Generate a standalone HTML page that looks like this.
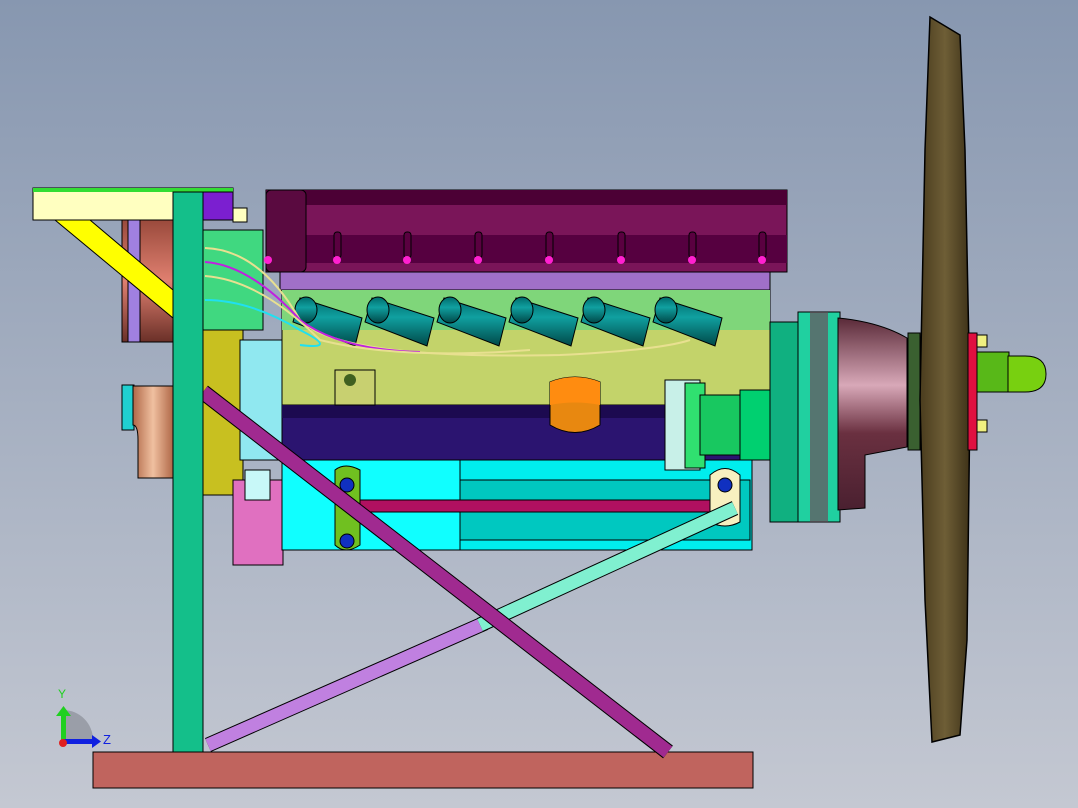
<!DOCTYPE html>
<html><head><style>html,body{margin:0;padding:0;overflow:hidden}svg{display:block}</style></head><body>
<svg width="1078" height="808" viewBox="0 0 1078 808" xmlns="http://www.w3.org/2000/svg">
<defs>
<linearGradient id="bg" x1="0" y1="0" x2="0" y2="1"><stop offset="0" stop-color="#8797b0"/><stop offset="1" stop-color="#c4c8d2"/></linearGradient>
<linearGradient id="blade" x1="0" y1="0" x2="1" y2="0"><stop offset="0" stop-color="#4a3c1e"/><stop offset="0.5" stop-color="#6e5e36"/><stop offset="1" stop-color="#3e3218"/></linearGradient>
<linearGradient id="cone" x1="0" y1="0" x2="0" y2="1"><stop offset="0" stop-color="#5a2a38"/><stop offset="0.35" stop-color="#d8a8b8"/><stop offset="0.6" stop-color="#6a3040"/><stop offset="1" stop-color="#4a2030"/></linearGradient>
<linearGradient id="tube" x1="0" y1="0" x2="0" y2="1"><stop offset="0" stop-color="#006a6a"/><stop offset="0.4" stop-color="#10a0a0"/><stop offset="1" stop-color="#004848"/></linearGradient>
<linearGradient id="copper" x1="0" y1="0" x2="1" y2="0"><stop offset="0" stop-color="#b06848"/><stop offset="0.5" stop-color="#f0c0a0"/><stop offset="1" stop-color="#b06848"/></linearGradient>
<linearGradient id="pulley" x1="0" y1="0" x2="0" y2="1"><stop offset="0" stop-color="#9a4a3c"/><stop offset="0.5" stop-color="#e08070"/><stop offset="1" stop-color="#6a3028"/></linearGradient>
</defs>
<rect width="1078" height="808" fill="url(#bg)"/>

<rect x="122" y="220" width="51" height="122" fill="url(#pulley)" stroke="#000"/>
<rect x="128" y="220" width="12" height="122" fill="#a080e0" stroke="#000"/>
<rect x="122" y="385" width="12" height="45" fill="#20d0d0" stroke="#000"/>
<path d="M133 386 H173 V478 H138 V440 Q138 425 133 425 Z" fill="url(#copper)" stroke="#000"/>

<rect x="93" y="752" width="660" height="36" fill="#c0645e" stroke="#000"/>

<rect x="203" y="320" width="40" height="175" fill="#c8c020" stroke="#000"/>
<rect x="240" y="340" width="42" height="120" fill="#90e8f0" stroke="#000"/>
<rect x="203" y="230" width="60" height="100" fill="#40d880" stroke="#000"/>
<rect x="233" y="480" width="50" height="85" fill="#e070c0" stroke="#000"/>
<rect x="245" y="470" width="25" height="30" fill="#c8f8f8" stroke="#000"/>

<rect x="266" y="190" width="521" height="82" fill="#7a1559" stroke="#000"/>
<rect x="266" y="190" width="521" height="15" fill="#4c0035"/>
<rect x="266" y="235" width="521" height="28" fill="#560040"/>
<rect x="266" y="190" width="40" height="82" rx="5" fill="#5a0a40" stroke="#000"/>
<g fill="#5a0040" stroke="#000">
<rect x="334" y="232" width="7" height="26" rx="3"/><rect x="404" y="232" width="7" height="26" rx="3"/><rect x="475" y="232" width="7" height="26" rx="3"/><rect x="546" y="232" width="7" height="26" rx="3"/><rect x="618" y="232" width="7" height="26" rx="3"/><rect x="689" y="232" width="7" height="26" rx="3"/><rect x="759" y="232" width="7" height="26" rx="3"/></g>
<g fill="#ff20d0">
<circle cx="268" cy="260" r="4"/><circle cx="337" cy="260" r="4"/><circle cx="407" cy="260" r="4"/><circle cx="478" cy="260" r="4"/><circle cx="549" cy="260" r="4"/><circle cx="621" cy="260" r="4"/><circle cx="692" cy="260" r="4"/><circle cx="762" cy="260" r="4"/></g>
<rect x="280" y="272" width="490" height="18" fill="#a070c8" stroke="#000"/>

<rect x="282" y="290" width="488" height="115" fill="#c3d36a" stroke="#000"/>
<rect x="282" y="290" width="488" height="40" fill="#7fd67a"/>
<rect x="282" y="405" width="488" height="55" fill="#2b1470" stroke="#000"/>
<rect x="282" y="405" width="488" height="13" fill="#1c0a50"/>
<rect x="282" y="460" width="470" height="90" fill="#00eeee" stroke="#000"/>
<rect x="460" y="480" width="290" height="60" fill="#00c8c0" stroke="#000"/>
<rect x="282" y="460" width="178" height="90" fill="#10ffff" stroke="#000"/>
<rect x="335" y="370" width="40" height="35" fill="#c8d070" stroke="#000"/><circle cx="350" cy="380" r="6" fill="#406020"/>
<path d="M550 382 Q575 372 600 382 V425 Q575 440 550 425 Z" fill="#e88810" stroke="#000"/>
<path d="M550 382 Q575 372 600 382 V405 Q575 400 550 405 Z" fill="#ff8c10"/>
<g fill="url(#tube)" stroke="#000">
<path d="M300 298 L362 318 L355 346 L293 322 Z"/><ellipse cx="306" cy="310" rx="11" ry="13"/>
<path d="M372 298 L434 318 L427 346 L365 322 Z"/><ellipse cx="378" cy="310" rx="11" ry="13"/>
<path d="M444 298 L506 318 L499 346 L437 322 Z"/><ellipse cx="450" cy="310" rx="11" ry="13"/>
<path d="M516 298 L578 318 L571 346 L509 322 Z"/><ellipse cx="522" cy="310" rx="11" ry="13"/>
<path d="M588 298 L650 318 L643 346 L581 322 Z"/><ellipse cx="594" cy="310" rx="11" ry="13"/>
<path d="M660 298 L722 318 L715 346 L653 322 Z"/><ellipse cx="666" cy="310" rx="11" ry="13"/>
</g>
<g fill="none" stroke-width="2">
<path d="M205 248 Q260 250 300 320 Q340 360 560 355 Q660 350 690 340" stroke="#e8e090"/>
<path d="M205 262 Q250 265 300 320 Q340 350 420 352" stroke="#c020e0"/>
<path d="M205 276 Q260 280 320 340 Q400 360 530 350" stroke="#e8e090"/>
<path d="M205 300 Q250 300 300 330 Q340 350 300 345" stroke="#20e0f0"/>
</g>
<rect x="665" y="380" width="35" height="90" fill="#c8f0e8" stroke="#000"/>
<rect x="685" y="383" width="20" height="85" fill="#30e070" stroke="#000"/>
<rect x="700" y="395" width="60" height="60" fill="#18c860" stroke="#000"/>
<rect x="740" y="390" width="30" height="70" fill="#00d070" stroke="#000"/>

<rect x="770" y="322" width="30" height="200" fill="#10b080" stroke="#000"/>
<rect x="798" y="312" width="42" height="210" fill="#20d0a0" stroke="#000"/>
<rect x="810" y="312" width="18" height="210" fill="#7a3850" opacity="0.6"/>
<path d="M838 318 Q880 322 907 338 V447 L865 455 V508 L838 510 Z" fill="url(#cone)" stroke="#000"/>
<rect x="908" y="333" width="12" height="117" fill="#3a6030" stroke="#000"/>
<path d="M930 17 L960 35 L965 150 L970 400 L967 640 L960 735 L932 742 L925 600 L920 400 L925 150 Z" fill="url(#blade)" stroke="#000" stroke-width="1.5"/>
<rect x="968" y="333" width="9" height="117" fill="#e01040" stroke="#000"/>
<rect x="977" y="335" width="10" height="12" fill="#f0f080" stroke="#000"/>
<rect x="977" y="380" width="10" height="12" fill="#f0f080" stroke="#000"/>
<rect x="977" y="420" width="10" height="12" fill="#f0f080" stroke="#000"/>
<rect x="977" y="352" width="32" height="40" fill="#58b818" stroke="#000"/>
<path d="M1008 356 H1025 Q1046 356 1046 374 Q1046 392 1025 392 H1008 Z" fill="#78d010" stroke="#000"/>

<rect x="355" y="500" width="380" height="12" fill="#b01060" stroke="#000"/>
<path d="M335 470 Q345 462 360 470 V545 Q345 555 335 545 Z" fill="#70c020" stroke="#000"/>
<circle cx="347" cy="485" r="7" fill="#1030c0" stroke="#000"/><circle cx="347" cy="541" r="7" fill="#1030c0" stroke="#000"/>
<path d="M710 475 Q725 462 740 475 V522 Q725 530 710 522 Z" fill="#f8f0c0" stroke="#000"/>
<circle cx="725" cy="485" r="7" fill="#1030c0" stroke="#000"/>

<line x1="208" y1="745" x2="485" y2="623" stroke="#000" stroke-width="15"/>
<line x1="208" y1="745" x2="485" y2="623" stroke="#c080e0" stroke-width="13"/>
<line x1="480" y1="625" x2="735" y2="508" stroke="#000" stroke-width="15"/>
<line x1="480" y1="625" x2="735" y2="508" stroke="#80f0d0" stroke-width="13"/>
<line x1="203" y1="392" x2="668" y2="752" stroke="#000" stroke-width="16"/>
<line x1="203" y1="392" x2="668" y2="752" stroke="#a02a90" stroke-width="14"/>

<polygon points="55,220 90,220 173,290 173,318" fill="#ffff00" stroke="#000"/>
<rect x="33" y="188" width="200" height="32" fill="#ffffc0" stroke="#000"/>
<rect x="33" y="188" width="200" height="4" fill="#33dd33"/>
<rect x="203" y="192" width="30" height="28" fill="#7b1fd0" stroke="#000"/>
<rect x="233" y="208" width="14" height="14" fill="#ffffc0" stroke="#000"/>
<rect x="173" y="192" width="30" height="560" fill="#14bf8a" stroke="#000"/>

<path d="M63 710 A30 30 0 0 1 93 740 H63 Z" fill="#9a9ea8"/>
<rect x="61" y="715" width="5" height="28" fill="#20d020"/>
<polygon points="56,716 63.5,706 71,716" fill="#20d020"/>
<rect x="63" y="739" width="30" height="5" fill="#1020e0"/>
<polygon points="92,735 101,741.5 92,748" fill="#1020e0"/>
<circle cx="63" cy="743" r="4" fill="#e02020"/>
<text x="58" y="698" font-family="Liberation Sans, sans-serif" font-size="12" fill="#20d020">Y</text>
<text x="103" y="744" font-family="Liberation Sans, sans-serif" font-size="13" fill="#1020e0">Z</text>
</svg>
</body></html>
